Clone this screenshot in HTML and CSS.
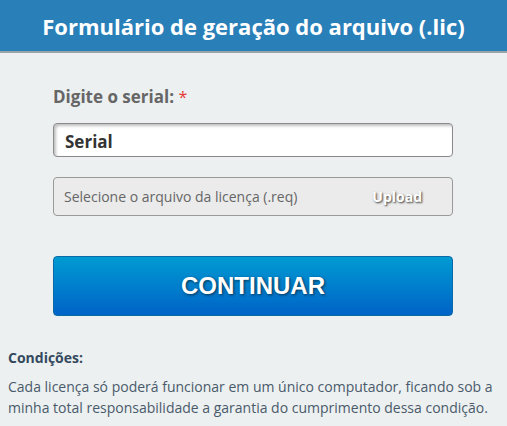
FILE: index.html
```html
<!DOCTYPE html>
<html lang="pt">
<head>
<meta charset="utf-8">
<link rel="stylesheet" href="styles.css">
</head>
<body>
<header class="top">
  <h1 class="title">Formulário de geração do arquivo (.lic)</h1>
</header>
<main class="form">
  <label class="label">Digite o serial: <span class="req">*</span></label>
  <div class="serial">Serial</div>
  <div class="file">
    <span class="file-text">Selecione o arquivo da licença (.req)</span>
    <span class="upload">Upload</span>
  </div>
  <button class="btn">CONTINUAR</button>
</main>
<section class="cond">
  <h2 class="cond-title">Condições:</h2>
  <p class="cond-text">Cada licença só poderá funcionar em um único computador, ficando sob a minha total responsabilidade a garantia do cumprimento dessa condição.</p>
</section>
</body>
</html>
```
FILE: styles.css
```css
html, body {
  margin: 0;
  padding: 0;
  background: #ecf0f1;
  font-family: "Open Sans", "Liberation Sans", sans-serif;
}
.top {
  background: #2980b9;
  height: 51px;
  border-bottom: 2px solid #9aa5a8;
  display: flex;
  align-items: center;
  justify-content: center;
}
.title {
  margin: 0;
  color: #fff;
  font-size: 22px;
  font-weight: 700;
}
.form {
  padding: 27px 54px 0 53px;
  display: flex;
  flex-direction: column;
}
.label {
  font-size: 17px;
  font-weight: 700;
  color: #666;
  height: 34px;
  line-height: 34px;
}
.req {
  color: #e53935;
  font-weight: 400;
  font-size: 16px;
}
.serial {
  margin-top: 9px;
  height: 32px;
  border: 1px solid #8a8a8a;
  border-radius: 4px;
  background: #fff;
  box-shadow: inset 2px 2px 3px rgba(0,0,0,0.25);
  font-size: 17px;
  font-weight: 700;
  color: #333;
  line-height: 35px;
  padding-left: 11px;
}
.file {
  margin-top: 20px;
  height: 37px;
  border: 1px solid #999;
  border-radius: 4px;
  background: #ebebeb;
  display: flex;
  align-items: center;
  justify-content: space-between;
  padding: 0 30px 0 10px;
}
.file-text {
  font-size: 14px;
  color: #666;
}
.upload {
  font-size: 14px;
  font-weight: 700;
  color: #fff;
  text-shadow: 1px 1px 2px rgba(0,0,0,0.75);
}
.btn {
  margin-top: 40px;
  height: 60px;
  border: 1px solid #0a6aa8;
  border-radius: 4px;
  background: linear-gradient(#009bd2, #0063c7);
  color: #fff;
  font-family: "Liberation Sans", Arial, sans-serif;
  font-size: 24px;
  font-weight: 700;
  text-shadow: 1px 1px 3px rgba(0,0,0,0.6);
  padding: 0;
}
.cond {
  padding: 32px 8px 0 8px;
}
.cond-title {
  margin: 0;
  font-size: 14px;
  font-weight: 700;
  color: #34495e;
  line-height: 20px;
}
.cond-text {
  margin: 8px 0 0 0;
  font-size: 14px;
  line-height: 21px;
  color: #4a5a6a;
}
```
